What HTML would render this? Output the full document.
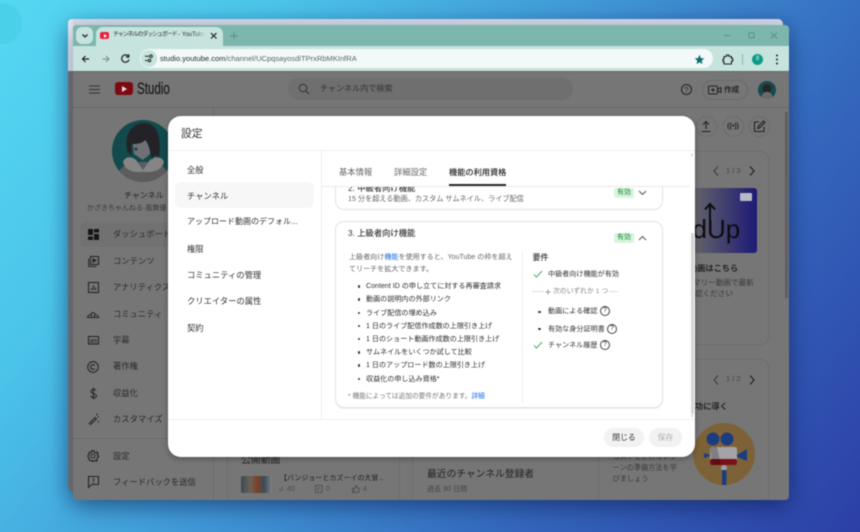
<!DOCTYPE html>
<html lang="ja"><head><meta charset="utf-8"><title>設定</title>
<style>
*{box-sizing:border-box}
html,body{margin:0;padding:0}
body{width:860px;height:532px;position:relative;overflow:hidden;font-family:"Liberation Sans","Noto Sans CJK JP",sans-serif;background:linear-gradient(127deg,#55d8f2 0%,#4bc4ea 22%,#3f93d4 50%,#3468bd 72%,#2c3fa6 100%);color:#222}
.a{position:absolute;white-space:nowrap}
#root{position:absolute;left:0;top:0;width:860px;height:532px;filter:blur(.5px)}
svg{position:absolute;overflow:visible}
.nav{font-size:8.3px;line-height:14px;color:#2a2a2a;left:113px}
.m{font-size:8.3px;line-height:14px;color:#333;left:187px}
.li{font-size:7.08px;line-height:12px;color:#2e2e2e;left:366px}
.dot{position:absolute;width:2.6px;height:2.6px;border-radius:50%;background:#333}
.badge{position:absolute;background:#d9f5dc;color:#1b8a3d;font-size:7px;width:20px;height:10px;line-height:10px;text-align:center;border-radius:2px}
.q{position:absolute;width:10px;height:10px;border:1px solid #444;border-radius:50%;font-size:7px;line-height:8px;text-align:center;color:#333}
.ic{fill:none;stroke:#262626;stroke-width:1.1}
.r{font-size:7.1px;line-height:12px;color:#333;left:548px}
</style></head><body><div id="root">
<div class="a" style="left:-18px;top:3px;width:40px;height:41px;border-radius:50%;background:#4bd0ea"></div>
<!-- back window -->
<div class="a" style="left:68px;top:19px;width:715px;height:473px;background:#777;border-radius:5px;box-shadow:0 6px 22px rgba(10,30,80,.35)"></div>
<div class="a" style="left:68px;top:19px;width:715px;height:8px;background:#d5dae6;border-radius:5px 5px 0 0"></div>
<div class="a" style="left:68px;top:19px;width:5px;height:52px;background:#e4e8ef;border-radius:4px 0 0 0"></div>
<!-- front window -->
<div class="a" style="left:73px;top:25px;width:716px;height:475px;background:#767676;border-radius:4px;overflow:hidden;box-shadow:0 8px 24px rgba(10,20,70,.4)">
 <div class="a" style="left:0;top:0;width:716px;height:21px;background:#7cb6ad"></div>
 <div class="a" style="left:0;top:21px;width:716px;height:25px;background:#c6e3dd"></div>
 <div class="a" style="left:0;top:46px;width:716px;height:1px;background:#666"></div>
</div>
<div class="a" style="left:76px;top:27px;width:17px;height:17px;background:#c6e3dd;border-radius:6px"></div>
<svg style="left:81px;top:33px" width="8" height="6"><path d="M1.500 1.500 4 4 6.500 1.500" fill="none" stroke="#222" stroke-width="1.300"/></svg>
<div class="a" style="left:96px;top:27px;width:127px;height:20px;background:#c6e3dd;border-radius:7px 7px 0 0"></div>
<div class="a" style="left:100px;top:32px;width:9px;height:7px;background:#f01c3c;border-radius:2px"></div>
<div class="a" style="left:103.500px;top:33.500px;border-left:3px solid #fff;border-top:2px solid transparent;border-bottom:2px solid transparent"></div>
<div class="a" style="left:113px;top:29px;width:91px;overflow:hidden;font-size:6px;line-height:12px;color:#333"><span style="letter-spacing:-1.100px">チャンネルのダッシュボード</span> - YouTube Studio</div>
<div class="a" style="left:195px;top:29px;width:10px;height:13px;background:linear-gradient(90deg,rgba(198,227,221,0),#c6e3dd)"></div>
<svg style="left:210px;top:32px" width="8" height="8"><path d="M1 1 6.500 6.500M6.500 1 1 6.500" stroke="#222" stroke-width="1.200"/></svg>
<svg style="left:229px;top:31px" width="10" height="10"><path d="M5 1V8.500M1.200 4.800H8.800" stroke="#5f8f88" stroke-width="1.100"/></svg>
<svg style="left:721px;top:32px" width="68" height="10"><path d="M3 3.500H9" stroke="#5f8f88" stroke-width="1"/><rect x="28" y=".8" width="5" height="5" fill="none" stroke="#5f8f88"/><path d="M50 .5 56 6.500M56 .5 50 6.500" stroke="#5f8f88"/></svg>
<svg style="left:81px;top:54px" width="10" height="10"><path d="M8 5H1.500M4.500 2 1.500 5 4.500 8" fill="none" stroke="#222" stroke-width="1.200"/></svg>
<svg style="left:101px;top:54px" width="10" height="10"><path d="M1.500 5H8M5 2 8 5 5 8" fill="none" stroke="#7d9a96" stroke-width="1.200"/></svg>
<svg style="left:120px;top:53px" width="11" height="11"><path d="M8.500 3.500A3.700 3.700 0 1 0 9 6.500M8.800 1.200V4H6" fill="none" stroke="#222" stroke-width="1.200"/></svg>
<div class="a" style="left:140px;top:49px;width:573px;height:19px;background:#f2f9f8;border-radius:10px"></div>
<div class="a" style="left:141px;top:50px;width:16px;height:17px;background:#c6e3dd;border-radius:8px"></div>
<svg style="left:144px;top:54px" width="10" height="9"><path d="M1 2.200H5M1 6.500H3.500" stroke="#222" stroke-width="1"/><circle cx="7" cy="2.200" r="1.300" fill="none" stroke="#222"/><circle cx="5.500" cy="6.500" r="1.300" fill="none" stroke="#222"/></svg>
<div class="a" style="left:160px;top:52px;font-size:7.550px;line-height:13px;color:#5a6766"><span style="color:#1f2a29">studio.youtube.com</span>/channel/UCpqsayosdiTPrxRbMKInfRA</div>
<svg style="left:694px;top:54px" width="11" height="11"><path d="M5.500 .8 6.900 4.100 10.300 4.400 7.700 6.700 8.500 10.100 5.500 8.300 2.500 10.100 3.300 6.700.7 4.400 4.100 4.100Z" fill="#0e6d6c"/></svg>
<svg style="left:722px;top:54px" width="12" height="11"><path d="M2 2.500H4.500V1H7V2.500H9.500V4.500H10.800V7H9.500V10H2V7.500H1V5H2Z" fill="none" stroke="#222" stroke-width="1.100"/></svg>
<div class="a" style="left:741.500px;top:54px;width:1px;height:11px;background:#8fb5ae"></div>
<div class="a" style="left:752px;top:54px;width:11px;height:11px;border-radius:50%;background:#0e9a87;color:#bfe;font-size:6px;line-height:11px;text-align:center">8</div>
<svg style="left:775px;top:54px" width="4" height="11"><circle cx="2" cy="1.500" r="1" fill="#222"/><circle cx="2" cy="5.500" r="1" fill="#222"/><circle cx="2" cy="9.500" r="1" fill="#222"/></svg>

<!-- studio header -->
<svg style="left:89px;top:85px" width="11" height="9"><path d="M0 1H11M0 4.500H11M0 8H11" stroke="#333" stroke-width=".9"/></svg>
<div class="a" style="left:115px;top:82px;width:18px;height:13px;background:#7d0a12;border-radius:3px"></div>
<div class="a" style="left:122px;top:85.500px;border-left:5.500px solid #ddd;border-top:3px solid transparent;border-bottom:3px solid transparent"></div>
<div class="a" style="left:136.500px;top:79px;font-size:16.500px;line-height:20px;color:#1c1c1c;transform:scaleX(.7);transform-origin:left;-webkit-text-stroke:.25px #1c1c1c">Studio</div>
<div class="a" style="left:288px;top:78px;width:285px;height:22px;border-radius:11px;background:#6f6f6f"></div>
<svg style="left:298px;top:83px" width="12" height="12"><circle cx="5" cy="5" r="3.800" fill="none" stroke="#333"/><path d="M8 8 11 11" stroke="#333"/></svg>
<div class="a" style="left:320px;top:82px;font-size:8.100px;line-height:14px;color:#333">チャンネル内で検索</div>
<div class="a" style="left:681px;top:84px;width:11px;height:11px;border:1px solid #222;border-radius:50%;font-size:7.500px;line-height:9px;text-align:center;color:#222">?</div>
<div class="a" style="left:702px;top:80px;width:46px;height:20px;border:1px solid #6a6a6a;border-radius:10px"></div>
<svg style="left:708px;top:85px" width="14" height="10"><rect x=".5" y="1" width="9" height="8" rx="1" fill="none" stroke="#222"/><path d="M10 4 13 2.500V7.500L10 6M5 3V7M3 5H7" fill="none" stroke="#222"/></svg>
<div class="a" style="left:724px;top:83px;font-size:7.600px;line-height:13px;font-weight:700;color:#272727">作成</div>
<div class="a" style="left:757.500px;top:81px;width:18px;height:18px;border-radius:50%;background:radial-gradient(circle at 50% 90%,#6a6a6a 0 28%,transparent 30%),radial-gradient(circle at 50% 42%,#262629 0 32%,transparent 35%),#174b4e"></div>
<div class="a" style="left:73px;top:107px;width:716px;height:1px;background:#696969"></div>
<div class="a" style="left:213px;top:108px;width:1px;height:392px;background:#6c6c6c"></div>
<div class="a" style="left:227px;top:440px;width:1px;height:60px;background:#6e6e6e"></div>

<!-- sidebar -->
<svg style="left:112px;top:120px" width="62" height="62">
 <defs><clipPath id="cp"><circle cx="31" cy="31" r="31"/></clipPath></defs>
 <g clip-path="url(#cp)">
  <rect width="62" height="62" fill="#124a4d"/>
  <path d="M4 62C6 48 12 44 22 42H42C50 44 56 48 58 62Z" fill="#5c5c5e"/>
  <path d="M11 42C13 36 20 36 24 40L31 50 38 40C42 36 50 36 52 42 50 50 42 52 36 52H26C20 52 13 50 11 42Z" fill="#858587"/>
  <path d="M20 16H38V34L31 40 22 34Z" fill="#6e7175"/>
  <path d="M15 30C12 12 22 3 32 3 44 3 50 14 47 38 44 34 42 34 40 40 38 30 36 22 33 20 30 24 24 24 20 24 19 28 19 32 20 36 18 34 16 33 15 30Z" fill="#232327"/>
  <circle cx="24" cy="29" r="1.600" fill="#2c3a48"/>
 </g>
</svg>
<div class="a" style="left:124px;top:189px;font-size:8px;line-height:14px;color:#222">チャンネル</div>
<div class="a" style="left:87px;top:203px;font-size:7px;line-height:11px;color:#3a3a3a;width:81px;overflow:hidden">かざきちゃんねる-風舞優 YouTube</div>
<div class="a" style="left:80px;top:222px;width:90px;height:25px;background:#717171;border-radius:6px"></div>
<svg style="left:88px;top:229px" width="11" height="11"><path d="M0 0H5V6H0ZM6 0H11V3.500H6ZM6 5H11V11H6ZM0 7.500H5V11H0Z" fill="#151515"/></svg>
<div class="a nav" style="top:227px">ダッシュボード</div>
<svg class="ic" style="left:88px;top:256px" width="11" height="11"><rect x="2.500" y=".5" width="8" height="8"/><path d="M.7 2.500V10.500H8.500"/><path d="M5 2.800 8 4.500 5 6.200Z" fill="#262626"/></svg>
<div class="a nav" style="top:254px">コンテンツ</div>
<svg class="ic" style="left:88px;top:282px" width="11" height="11"><rect x=".5" y=".5" width="10" height="10"/><path d="M3.500 8V6M5.500 8V3.500M7.500 8V5.500"/></svg>
<div class="a nav" style="top:280px">アナリティクス</div>
<svg class="ic" style="left:87px;top:309px" width="12" height="10"><path d="M.5 8.500C1 6 3 5.500 4 5.500 4.500 3 7.500 3 8 5.500 9 5.500 11 6 11.500 8.500ZM4.500 8.500V6M7.500 8.500V6"/></svg>
<div class="a nav" style="top:307px">コミュニティ</div>
<svg class="ic" style="left:88px;top:336px" width="11" height="9"><rect x=".5" y=".5" width="10" height="7.500"/><path d="M2 4H9M2 6H6M7 6H9"/></svg>
<div class="a nav" style="top:333px">字幕</div>
<svg class="ic" style="left:87px;top:361px" width="12" height="12"><circle cx="6" cy="6" r="5.300"/><path d="M7.800 4.600A2.300 2.300 0 1 0 7.800 7.400"/></svg>
<div class="a nav" style="top:359px">著作権</div>
<svg class="ic" style="left:89px;top:387px" width="9" height="13"><path d="M7 3.500C6 2 2 2 2 4.500S7.500 6.500 7.500 9 3 11 1.500 9M4.500 .5V12.500"/></svg>
<div class="a nav" style="top:386px">収益化</div>
<svg class="ic" style="left:88px;top:413px" width="12" height="12"><path d="M.8 11 7 4.500 8.500 6 2 12M9 .5V2.500M11 4H9.500M10.500 8V9.500"/></svg>
<div class="a nav" style="top:412px">カスタマイズ</div>
<div class="a" style="left:73px;top:438px;width:140px;height:1px;background:#6a6a6a"></div>
<svg class="ic" style="left:87px;top:450px" width="12" height="12"><circle cx="6" cy="6" r="2"/><path d="M5 .6H7L7.300 2.200 8.700 2.800 10 1.900 11.100 3.300 10.100 4.500 10.500 5.500 11.600 6V7L10.300 7.500 9.800 9 10.600 10.300 9.300 11.300 8 10.200 6.500 11.500H5.300L4.800 10.200 3 10.600 1.800 9.500 2.400 8 1 7.100V5.200L2.300 4.700 1.900 3 3.100 1.900 4.500 2.500Z"/></svg>
<div class="a nav" style="top:449px">設定</div>
<svg class="ic" style="left:88px;top:476px" width="11" height="12"><path d="M.5.500H10.500V8.500H3.500L.5 11.500Z"/><path d="M5.500 2V5.500M5.500 6.500V7.500"/></svg>
<div class="a nav" style="top:475px">フィードバックを送信</div>

<!-- behind-modal content -->
<div class="a" style="left:241px;top:454px;font-size:9.800px;line-height:14px;color:#222">公開動画</div>
<div class="a" style="left:241px;top:476px;width:31px;height:17px;border-radius:2px;background:linear-gradient(90deg,#3c4a52 0,#6a6258 30%,#7c4028 52%,#3a4c58 75%,#7d8284 100%)"></div>
<div class="a" style="left:280px;top:473px;font-size:7px;line-height:12px;color:#222">【バンジョーとカズーイの大冒...</div>
<div class="a" style="left:287px;top:484px;font-size:7px;line-height:11px;color:#4a4a4a">40</div>
<svg style="left:279px;top:486px" width="5" height="6"><path d="M1 5V3M3 5V1" stroke="#4a4a4a" stroke-width=".8"/></svg>
<svg style="left:315px;top:485px" width="8" height="8"><path d="M.5.500H7V7.500H.5ZM2 3H5M2 5H4" fill="none" stroke="#4a4a4a" stroke-width=".8"/></svg>
<div class="a" style="left:326px;top:484px;font-size:7px;line-height:11px;color:#4a4a4a">0</div>
<svg style="left:352px;top:485px" width="8" height="8"><path d="M.5 3.500H2V7.500H.5ZM2 3.500 4 .5 5 1.500 4.500 3H7.500L6.500 7.500H2" fill="none" stroke="#4a4a4a" stroke-width=".8"/></svg>
<div class="a" style="left:363px;top:484px;font-size:7px;line-height:11px;color:#4a4a4a">4</div>
<div class="a" style="left:427px;top:467px;font-size:9.750px;line-height:15px;color:#222">最近のチャンネル登録者</div>
<div class="a" style="left:427px;top:483px;font-size:7.100px;line-height:12px;color:#444">過去 90 日間</div>
<div class="a" style="left:399px;top:457px;width:1px;height:43px;background:#6e6e6e"></div>
<div class="a" style="left:412px;top:440px;width:1px;height:60px;background:#6e6e6e"></div>
<div class="a" style="left:595.500px;top:116px;width:21px;height:21px;border:1px solid #6b6b6b;border-radius:50%;display:none"></div>
<div class="a" style="left:695.500px;top:116px;width:21px;height:21px;border:1px solid #6b6b6b;border-radius:50%"></div>
<svg style="left:700px;top:120px" width="12" height="13"><path d="M6 9V1.500M3 4.500 6 1.500 9 4.500M1.500 11.500H10.500" fill="none" stroke="#222" stroke-width="1.100"/></svg>
<div class="a" style="left:722.500px;top:116px;width:21px;height:21px;border:1px solid #6b6b6b;border-radius:50%;font-size:7px;line-height:19px;text-align:center;color:#222;font-weight:700">((•))</div>
<div class="a" style="left:749px;top:116px;width:21px;height:21px;border:1px solid #6b6b6b;border-radius:50%"></div>
<svg style="left:753px;top:120px" width="13" height="13"><path d="M6 2H1.500V11.500H11V7M5 8.500 5.500 6 10.500 1 12 2.500 7 7.500Z" fill="none" stroke="#222" stroke-width="1.100"/></svg>
<div class="a" style="left:598px;top:151px;width:171px;height:194px;border:1px solid #6d6d6d;border-radius:8px"></div>
<div class="a" style="left:598px;top:359px;width:171px;height:141px;border:1px solid #6d6d6d;border-bottom:none;border-radius:8px 8px 0 0"></div>
<div class="a" style="left:690px;top:188px;width:67px;height:65px;background:linear-gradient(90deg,#686868,#1d1a76);border-radius:0 3px 3px 0"></div>
<div class="a" style="left:740px;top:193px;width:12px;height:8px;background:#b9b9c8;border-radius:1px"></div>
<div class="a" style="left:692.500px;top:211px;font-size:26px;line-height:36px;color:#0b0b10">dUp</div>
<svg style="left:703px;top:203px" width="14" height="30"><path d="M7 30V1M2 6.500 7 1 12 6.500" fill="none" stroke="#0b0b10" stroke-width="2"/></svg>
<svg style="left:711px;top:165px" width="50" height="12"><path d="M7 1.500 3 6 7 10.500" fill="none" stroke="#3a3a3a" stroke-width="1"/><path d="M39 1.500 43 6 39 10.500" fill="none" stroke="#222" stroke-width="1.200"/></svg>
<div class="a" style="left:726px;top:165px;font-size:7.500px;line-height:12px;color:#444">1 / 3</div>
<div class="a" style="left:689px;top:262px;font-size:8.200px;line-height:14px;color:#222;font-weight:700">動画はこちら</div>
<div class="a" style="left:693px;top:277px;font-size:7.600px;line-height:12px;color:#3a3a3a">マリー動画で最新</div>
<div class="a" style="left:695px;top:288px;font-size:7.600px;line-height:12px;color:#3a3a3a">認ください</div>
<svg style="left:711px;top:374px" width="50" height="12"><path d="M7 1.500 3 6 7 10.500" fill="none" stroke="#3a3a3a" stroke-width="1"/><path d="M39 1.500 43 6 39 10.500" fill="none" stroke="#222" stroke-width="1.200"/></svg>
<div class="a" style="left:726px;top:373px;font-size:7.500px;line-height:12px;color:#444">1 / 2</div>
<div class="a" style="left:695px;top:400px;font-size:8.200px;line-height:14px;color:#222;font-weight:700">功に導く</div>
<div class="a" style="left:693px;top:423px;width:62px;height:62px;border-radius:50%;background:#7d6238"></div>
<svg style="left:693px;top:423px" width="62" height="62"><circle cx="20" cy="16" r="6.500" fill="#1b3d80"/><circle cx="34" cy="16" r="6.500" fill="#1b3d80"/><rect x="17" y="24" width="27" height="18" rx="2" fill="#a3a3a8"/><rect x="17" y="36" width="27" height="6" rx="2" fill="#7a1018"/><path d="M17 24H24L28 42H19Z" fill="#000" opacity=".22"/><path d="M44 32 54 26V38L44 34ZM17 32 11 30V35L17 33Z" fill="#1b3d80"/><circle cx="31" cy="45" r="3" fill="#9ca0ab"/><rect x="29" y="47" width="4.500" height="15" fill="#1b3d80"/></svg>
<div class="a" style="left:612.500px;top:451px;font-size:7.200px;line-height:12px;color:#3a3a3a">コストをかけないシ</div>
<div class="a" style="left:612.500px;top:462px;font-size:7.200px;line-height:12px;color:#3a3a3a">ーンの準備方法を学</div>
<div class="a" style="left:612.500px;top:473px;font-size:7.200px;line-height:12px;color:#3a3a3a">びましょう</div>
<div class="a" style="left:785px;top:112px;width:3px;height:186px;background:#5f5f5f"></div>

<!-- modal -->
<div class="a" style="left:168px;top:116px;width:527px;height:341px;background:#fff;border-radius:13px;box-shadow:0 2px 6px rgba(0,0,0,.3)"></div>
<div class="a" style="left:181px;top:126px;font-size:10.800px;line-height:16px;color:#333">設定</div>
<div class="a" style="left:168px;top:150px;width:527px;height:1px;background:#eee"></div>
<div class="a" style="left:321px;top:151px;width:1px;height:268px;background:#eee"></div>
<div class="a" style="left:168px;top:419px;width:527px;height:1px;background:#eee"></div>
<div class="a" style="left:175px;top:182px;width:139px;height:26px;background:#f7f7f7;border-radius:6px"></div>
<div class="a m" style="top:163px">全般</div>
<div class="a m" style="top:189px">チャンネル</div>
<div class="a m" style="top:215px;font-size:8px">アップロード動画のデフォル...</div>
<div class="a m" style="top:242px">権限</div>
<div class="a m" style="top:268px">コミュニティの管理</div>
<div class="a m" style="top:294px">クリエイターの属性</div>
<div class="a m" style="top:321px">契約</div>

<!-- content cards -->
<div class="a" style="left:335px;top:170px;width:328px;height:40px;border:1px solid #e2e2e2;border-radius:9px"></div>
<div class="a" style="left:348px;top:182px;font-size:8.300px;line-height:12px;color:#333;font-weight:500">2. 中級者向け機能</div>
<div class="a" style="left:348px;top:193px;font-size:7.150px;line-height:12px;color:#666">15 分を超える動画、カスタム サムネイル、ライブ配信</div>
<div class="badge" style="left:614px;top:188px">有効</div>
<svg style="left:638px;top:190px" width="9" height="6"><path d="M1 1 4.500 4.500 8 1" fill="none" stroke="#555" stroke-width="1"/></svg>
<div class="a" style="left:322px;top:151px;width:368px;height:35px;background:#fff"></div>
<div class="a" style="left:322px;top:186px;width:368px;height:1px;background:#e8e8e8"></div>
<div class="a" style="left:339px;top:166px;font-size:8.300px;line-height:13px;color:#666">基本情報</div>
<div class="a" style="left:394px;top:166px;font-size:8.300px;line-height:13px;color:#666">詳細設定</div>
<div class="a" style="left:449px;top:166px;font-size:8.200px;line-height:13px;color:#222;font-weight:500">機能の利用資格</div>
<div class="a" style="left:449px;top:184px;width:57px;height:2px;background:#282828"></div>

<div class="a" style="left:335px;top:221px;width:328px;height:187px;border:1px solid #e2e2e2;border-radius:9px;box-shadow:0 1px 0 #eee"></div>
<div class="a" style="left:348px;top:226px;font-size:8.300px;line-height:14px;color:#333;font-weight:500">3. 上級者向け機能</div>
<div class="badge" style="left:614px;top:233px">有効</div>
<svg style="left:638px;top:235px" width="9" height="6"><path d="M1 5 4.500 1.500 8 5" fill="none" stroke="#555" stroke-width="1"/></svg>
<div class="a" style="left:349px;top:252px;font-size:7.070px;line-height:11.500px;color:#666">上級者向け<span style="color:#1a73e8">機能</span>を使用すると、YouTube の枠を超え<br>てリーチを拡大できます。</div>
<div class="dot" style="left:357.500px;top:285px"></div><div class="a li" style="top:280px">Content ID の申し立てに対する再審査請求</div>
<div class="dot" style="left:357.500px;top:298px"></div><div class="a li" style="top:293px">動画の説明内の外部リンク</div>
<div class="dot" style="left:357.500px;top:311.500px"></div><div class="a li" style="top:307px">ライブ配信の埋め込み</div>
<div class="dot" style="left:357.500px;top:324.500px"></div><div class="a li" style="top:320px">1 日のライブ配信作成数の上限引き上げ</div>
<div class="dot" style="left:357.500px;top:337.500px"></div><div class="a li" style="top:333px">1 日のショート動画作成数の上限引き上げ</div>
<div class="dot" style="left:357.500px;top:351px"></div><div class="a li" style="top:346px">サムネイルをいくつか試して比較</div>
<div class="dot" style="left:357.500px;top:364px"></div><div class="a li" style="top:359px">1 日のアップロード数の上限引き上げ</div>
<div class="dot" style="left:357.500px;top:377.500px"></div><div class="a li" style="top:373px">収益化の申し込み資格*</div>
<div class="a" style="left:348px;top:390.500px;font-size:6.700px;line-height:11px;color:#777">* 機能によっては追加の要件があります。<span style="color:#1a73e8">詳細</span></div>
<div class="a" style="left:522px;top:251px;width:1px;height:152px;background:#eee"></div>
<div class="a" style="left:532.500px;top:251px;font-size:8px;line-height:13px;color:#333;font-weight:500">要件</div>
<svg style="left:533px;top:270px" width="10" height="8"><path d="M1 4.500 3.500 7 9 1" fill="none" stroke="#4caf62" stroke-width="1"/></svg>
<div class="a r" style="top:268px">中級者向け機能が有効</div>
<div class="a" style="left:532px;top:291px;width:12px;height:1px;background:#ddd"></div>
<svg style="left:545px;top:288.500px" width="6" height="6"><path d="M3 .5V5.500M.5 3H5.500" stroke="#888" stroke-width=".8"/></svg>
<div class="a" style="left:553px;top:285.500px;font-size:6.800px;line-height:12px;color:#888">次のいずれか 1 つ</div>
<div class="a" style="left:609px;top:291px;width:9px;height:1px;background:#ddd"></div>
<div class="dot" style="left:538px;top:310.500px"></div>
<div class="a r" style="top:305px">動画による確認</div>
<div class="q" style="left:600px;top:306px">?</div>
<div class="dot" style="left:538px;top:327.500px"></div>
<div class="a r" style="top:323px">有効な身分証明書</div>
<div class="q" style="left:607px;top:324px">?</div>
<svg style="left:533px;top:341px" width="10" height="8"><path d="M1 4.500 3.500 7 9 1" fill="none" stroke="#4caf62" stroke-width="1"/></svg>
<div class="a r" style="top:339px">チャンネル履歴</div>
<div class="q" style="left:600px;top:340px">?</div>

<!-- scrollbar -->
<div class="a" style="left:690.500px;top:233px;width:3px;height:181px;background:#d4d4d4"></div>
<div class="a" style="left:690.500px;top:153px;border-bottom:3px solid #c4c4c4;border-left:1.500px solid transparent;border-right:1.500px solid transparent"></div>
<div class="a" style="left:690.500px;top:415px;border-top:3px solid #c4c4c4;border-left:1.500px solid transparent;border-right:1.500px solid transparent"></div>

<!-- footer buttons -->
<div class="a" style="left:604px;top:428px;width:40px;height:19px;border-radius:10px;background:#f2f2f2;font-size:7.800px;line-height:19px;text-align:center;color:#333">閉じる</div>
<div class="a" style="left:649px;top:428px;width:33px;height:19px;border-radius:10px;background:#f2f2f2;font-size:7.800px;line-height:19px;text-align:center;color:#aaa">保存</div>
</div></body></html>
